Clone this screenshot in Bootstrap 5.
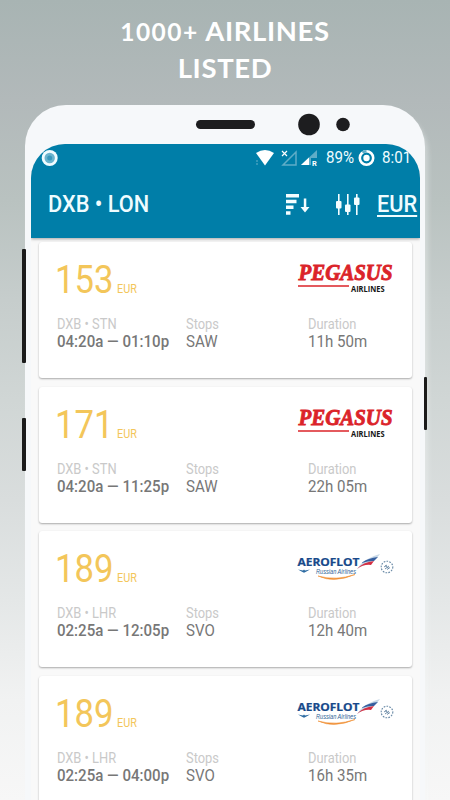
<!DOCTYPE html>
<html lang="en">
<head>
<meta charset="utf-8">
<meta name="viewport" content="width=device-width, initial-scale=1">
<title>1000+ Airlines Listed</title>
<link href="https://cdn.jsdelivr.net/npm/bootstrap@5.3.0/dist/css/bootstrap.min.css" rel="stylesheet">
<style>
body{font-family:Roboto,"Liberation Sans",sans-serif;background:linear-gradient(#a8b4b3 0,#b2b9ba 100px,#b9c2c0 200px,#c6cdcc 300px,#d0d6d5 400px,#d9dddd 500px,#e4e7e7 600px,#f1f2f2 700px,#f7f7f7 800px);height:800px}
.scene{width:450px;height:800px}
.headline{height:105px;padding-top:13px;font:700 27.5px/36px Lato,sans-serif;letter-spacing:.65px;color:#fff}
.oldstyle{font-size:24.5px;letter-spacing:1.5px}
.phone{width:400px;height:695px;margin-left:25px;background:#f6f8fa;border-radius:41px 42px 0 0;box-shadow:3px 6px 5px rgba(245,247,248,.4)}
.bezel{height:39px}
.bezel svg,.side-key{display:block}
.side-key{width:3.4px;background:#1b1b1b;border-radius:1px}
.key-a{left:-2.6px;top:144px;height:114px}
.key-b{left:-2.6px;top:313px;height:53px}
.key-c{left:399px;top:272px;height:53px}
.screen{width:389px;height:656px;margin-left:6px;background:#f9f9f9;border-radius:34px 34px 0 0}
.appbar{height:94px;background:#007ea8;color:#effcff;box-shadow:0 1px 3px rgba(0,0,0,.35)}
.appbar svg{flex:none}
.status{height:28px;padding:0 9px 0 10px;font-size:16px;line-height:28px}
.tools{height:66px;padding:0 3px 0 17px;font-size:23px;line-height:70px}
.squeeze{display:block;transform:scaleX(.9);transform-origin:0 50%;white-space:nowrap}
.status .squeeze,.tools .squeeze{transform:scaleX(.945)}
.pct{width:32px;margin-left:5px}
.clock{width:29px;margin-left:7px}
.currency{width:40px;margin-left:17px;text-underline-offset:3px;text-decoration-thickness:2px}
.deals{padding:4px 8px;gap:8.6px}
.deal{height:136px;padding:18px 15px 0 18px;border:0;border-radius:3px;box-shadow:0 1px 2px rgba(0,0,0,.32);background:#fff}
.fare{height:38px}
.price{font-size:38.5px;line-height:40px;color:#f3c65a;margin-left:-2.5px}
.price small{font-size:12px;margin-left:4px}
.facts{margin-top:18px;grid-template-columns:129px 121.5px 1fr}
.facts dt{font-weight:400;font-size:14.3px;line-height:17px;color:#c9c9c9}
.facts dd{margin:0;font-size:16.5px;line-height:18px;color:#777;transform:scaleX(.913)}
.facts .when{font-weight:500}
</style>
</head>
<body>
<svg width="0" height="0" class="d-none">
  <symbol id="pegasus" viewBox="0 0 100 40">
    <text x="1.500" y="20" font-family="Liberation Serif" font-weight="700" font-style="italic" font-size="23.500" fill="#db2329" stroke="#db2329" stroke-width=".9" textLength="94" lengthAdjust="spacingAndGlyphs">PEGASUS</text>
    <path d="M1 26h51" stroke="#db2329" stroke-width="1.600"/>
    <text x="54" y="31.500" font-family="Open Sans" font-weight="700" font-size="9.400" fill="#161616" textLength="33.500" lengthAdjust="spacingAndGlyphs">AIRLINES</text>
  </symbol>
  <symbol id="aeroflot" viewBox="0 0 100 40">
    <text x=".5" y="17" font-family="Open Sans" font-weight="700" font-size="9.800" fill="#17498a" stroke="#17498a" stroke-width=".2" textLength="62" lengthAdjust="spacingAndGlyphs">AEROFLOT</text>
    <text x="19" y="24.500" font-family="Liberation Sans" font-style="italic" font-weight="400" font-size="6.500" fill="#2f6496" textLength="40" lengthAdjust="spacingAndGlyphs">Russian Airlines</text>
    <path d="M1 20.500l5 1 1-1 1 1 5-1-4 2.300-2 1-2-1z" fill="#2c6ba2"/>
    <path d="M21 27q16 7.500 37-1.500-19 6.500-37 1.500z" fill="#f08a2c" stroke="#f0943c" stroke-width=".6"/>
    <path d="M60 20Q67 9 83 5 79 11 71 14 66 16 60 20z" fill="#c7d8e7"/>
    <path d="M65 13.500Q71 9 81 8L77 12Q70 12 65 14z" fill="#365f9f"/>
    <path d="M60 20Q66 13 77 12L74 16Q67 15 60 20z" fill="#d32f43"/>
    <g fill="none" stroke="#6687a4"><circle cx="90" cy="18" r="5.800" stroke-width="1.100" stroke-dasharray="1.700 1.200"/><path d="M87 18l3-2M88 20l4-3M90 20.500l3-2M88 16.500l4 3" stroke-width=".9"/></g>
  </symbol>
</svg>
<main class="scene overflow-hidden">
  <h1 class="headline text-center m-0"><span class="oldstyle">1000+</span> AIRLINES<br>LISTED</h1>
  <section class="phone position-relative">
    <i class="side-key key-a position-absolute"></i><i class="side-key key-b position-absolute"></i><i class="side-key key-c position-absolute"></i>
    <div class="bezel"><svg width="400" height="39" fill="#1d1d1f"><rect x="171" y="15" width="59" height="9" rx="4.5"/><circle cx="284" cy="19.5" r="10.8"/><circle cx="318" cy="19.5" r="6.8"/></svg></div>
    <div class="screen overflow-hidden d-flex flex-column">
      <header class="appbar flex-shrink-0 position-relative">
        <div class="status d-flex align-items-center">
          <svg width="18" height="18"><circle cx="8.7" cy="9" r="8" fill="#f0fcff"/><circle cx="8.7" cy="9" r="5.2" fill="#6ab4ce"/><circle cx="8.7" cy="9" r="2.5" fill="#3a98bb"/></svg>
          <svg class="ms-auto" width="66" height="20"><path d="M1 5Q10 -1 19 5L10 17.500Z" fill="#fff"/><path d="M2 12v5" stroke="#66b1ca" stroke-dasharray="2 1"/><path d="M41 4V17H28Z" fill="none" stroke="#5fadc7" stroke-width="1.5"/><path d="M27 3l5 5m0-5l-5 5" stroke="#fff" stroke-width="1.2"/><path d="M62 2V17H46Z" fill="#5fadc7"/><path d="M54 9.500V17H46Z" fill="#fff"/><rect x="56" y="10" width="8" height="9" fill="#007ea8"/><text x="57" y="17.500" font-size="7.500" font-weight="700" fill="#fff" textLength="5">R</text></svg>
          <span class="squeeze pct">89%</span>
          <svg width="17" height="18"><circle cx="8.500" cy="9" r="6.700" fill="none" stroke="#fff" stroke-width="2.600"/><circle cx="8.500" cy="9" r="3.200" fill="#fff"/><path d="M8.500 2.300A6.700 6.700 0 0 0 4.500 3.600" fill="none" stroke="#5fadc7" stroke-width="2.600"/></svg>
          <span class="squeeze clock">8:01</span>
        </div>
        <div class="tools d-flex align-items-center">
          <span class="squeeze fw-medium">DXB • LON</span>
          <svg class="ms-auto" width="26" height="24" fill="#f4fdff"><path d="M1 1h13v3.500H1zM1 6.700h10.500v3.500H1zM1 12.500h7.500V16H1zM1 18.300h4.500v3.500H1zM18.800 5.500h2.500V14H24.500L20 19.500 15.500 14h3.300z"/></svg>
          <svg class="ms-4" width="25" height="24" fill="#f4fdff"><path d="M3 1h1.600v21H3zM12 1h1.600v21H12zM21 1h1.600v21H21z"/><rect x="1" y="8" width="5.500" height="7.500" rx="1"/><rect x="10" y="11.500" width="5.500" height="7.500" rx="1"/><rect x="19" y="4.500" width="5.500" height="7.500" rx="1"/></svg>
          <span class="squeeze currency fw-medium text-decoration-underline">EUR</span>
        </div>
      </header>
      <div class="deals d-flex flex-column" id="deals"></div>
    </div>
  </section>
</main>
<script>
const deals=[
 [153,'STN','04:20a — 01:10p','SAW','11h 50m','pegasus','Pegasus Airlines'],
 [171,'STN','04:20a — 11:25p','SAW','22h 05m','pegasus','Pegasus Airlines'],
 [189,'LHR','02:25a — 12:05p','SVO','12h 40m','aeroflot','Aeroflot'],
 [189,'LHR','02:25a — 04:00p','SVO','16h 35m','aeroflot','Aeroflot']];
document.getElementById('deals').innerHTML=deals.map(([p,to,when,stop,time,logo,name])=>`
<article class="card deal flex-shrink-0">
 <div class="fare d-flex justify-content-between">
  <div class="price squeeze">${p}<small>EUR</small></div>
  <svg width="100" height="40" role="img" aria-label="${name}"><use href="#${logo}"/></svg>
 </div>
 <dl class="facts d-grid mb-0">
  <div><dt class="squeeze">DXB • ${to}</dt><dd class="squeeze when">${when}</dd></div>
  <div><dt class="squeeze">Stops</dt><dd class="squeeze">${stop}</dd></div>
  <div><dt class="squeeze">Duration</dt><dd class="squeeze">${time}</dd></div>
 </dl>
</article>`).join('');
</script>
<script src="https://cdn.jsdelivr.net/npm/bootstrap@5.3.0/dist/js/bootstrap.bundle.min.js"></script>
</body>
</html>
